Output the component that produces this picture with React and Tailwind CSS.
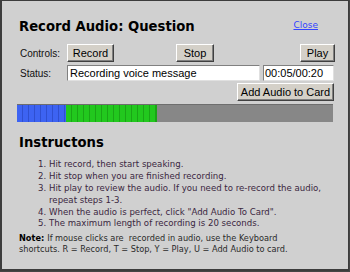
import React from 'react';

const steps = [
  'Hit record, then start speaking.',
  'Hit stop when you are finished recording.',
  'Hit play to review the audio. If you need to re-record the audio, repeat steps 1-3.',
  'When the audio is perfect, click "Add Audio To Card".',
  'The maximum length of recording is 20 seconds.',
];

function Btn({ children, className = '' }) {
  return (
    <button
      className={
        'h-[18px] bg-[#d4d0c8] border border-t-white border-l-white border-r-[#404040] border-b-[#404040] shadow-[inset_-1px_-1px_0_#808080] text-[11px] leading-none text-black px-0 ' +
        className
      }
    >
      {children}
    </button>
  );
}

export default function App() {
  const blue = Array.from({ length: 8 });
  const green = Array.from({ length: 15 });
  return (
    <div className="w-[350px] h-[272px] bg-[#454545] font-['Liberation_Sans',sans-serif]">
      <div className="w-[349px] h-[271px] border-l-2 border-t border-r border-b-2 border-[#3c3c3c] bg-[#d0d0d0] flex flex-col">
        {/* header */}
        <div className="flex justify-between items-start pl-[17px] pr-[30px] pt-[19px]">
          <h1 className="font-['DejaVu_Sans',sans-serif] font-bold text-[13.2px] leading-none text-black">
            Record Audio: Question
          </h1>
          <a href="#" className="font-['DejaVu_Sans',sans-serif] text-[9px] leading-none text-[#3344ff] underline mt-[1px]">
            Close
          </a>
        </div>

        {/* controls */}
        <div className="flex items-center mt-[11px] pl-[18px]">
          <span className="w-[47px] text-[10px] text-[#111]">Controls:</span>
          <Btn className="w-[47px]">Record</Btn>
          <Btn className="w-[38px] ml-[62px]">Stop</Btn>
          <Btn className="w-[35px] ml-[86px]">Play</Btn>
        </div>

        {/* status */}
        <div className="flex items-center mt-[3px] pl-[18px]">
          <span className="w-[47px] text-[10px] text-[#111]">Status:</span>
          <div className="w-[193px] h-[16px] bg-white border border-t-[#808080] border-l-[#808080] border-r-[#e0e0e0] border-b-[#e0e0e0] text-[11px] leading-[14px] pl-[2px] text-black">
            Recording voice message
          </div>
          <div className="w-[71px] h-[16px] ml-[3px] bg-white border border-t-[#808080] border-l-[#808080] border-r-[#e0e0e0] border-b-[#e0e0e0] text-[11px] leading-[14px] pl-[1px] text-black">
            00:05/00:20
          </div>
        </div>

        <div className="flex justify-end pr-[14px] mt-[2px]">
          <Btn className="w-[97px]">Add Audio to Card</Btn>
        </div>

        {/* level meter */}
        <div className="flex h-[18px] w-[316px] ml-[15px] mt-[3px] bg-[#878787] border-t border-[#6e6e6e]">
          {blue.map((_, i) => (
            <div key={'b' + i} className="w-[6px] h-full bg-[#3d63f2] border-r border-[#2f4fd0]" />
          ))}
          <div className="w-[1px] h-full bg-[#3d63f2]" />
          {green.map((_, i) => (
            <div key={'g' + i} className="w-[6px] h-full bg-[#22c81e] border-r border-[#1aa516]" />
          ))}
          <div className="w-[1px] h-full bg-[#1aa516]" />
        </div>

        {/* instructions */}
        <h2 className="font-['DejaVu_Sans',sans-serif] font-bold text-[13.2px] leading-none text-black pl-[17px] mt-[14px]">
          Instructons
        </h2>
        <ol className="list-decimal pl-[47px] pr-[20px] mt-[10px] font-['DejaVu_Sans',sans-serif] text-[8.6px] leading-[11.8px] text-[#3a2740]">
          {steps.map((s) => (
            <li key={s}>{s}</li>
          ))}
        </ol>
        <div className="pl-[17px] mt-[3px] font-['DejaVu_Sans',sans-serif] text-[8.2px] leading-[10.5px] text-[#2a2a2a]">
          <div className="flex gap-[3px]">
            <b className="text-black">Note:</b>
            <span>If mouse clicks are &nbsp;recorded in audio, use the Keyboard</span>
          </div>
          <div>shortcuts. R = Record, T = Stop, Y = Play, U = Add Audio to card.</div>
        </div>
      </div>
    </div>
  );
}
